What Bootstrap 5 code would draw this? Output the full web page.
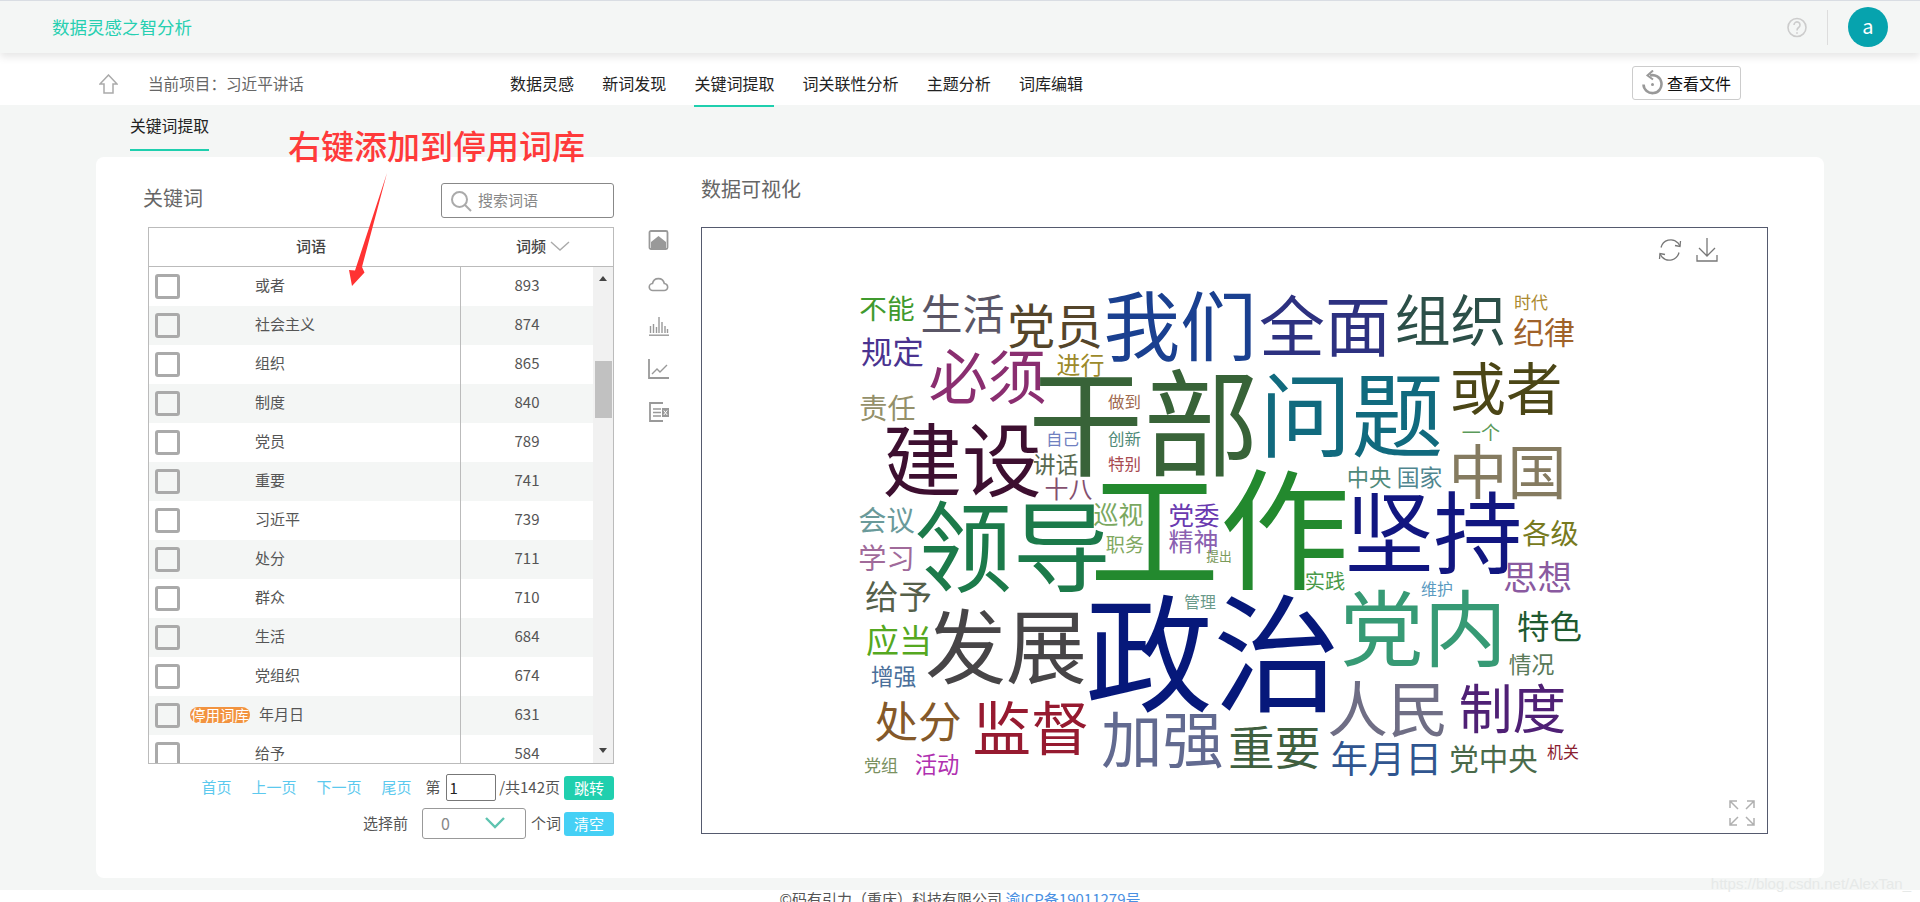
<!doctype html>
<html lang="zh-CN">

<head>
    <meta charset="UTF-8">
    <meta name="viewport" content="width=device-width, initial-scale=1.0">
    <title>数据灵感之智分析</title>
    <link href="https://cdn.jsdelivr.net/npm/bootstrap@5.3.3/dist/css/bootstrap.min.css" rel="stylesheet">
    <style>
        html, body { height: 902px; overflow: hidden; }
        body {
            background-color: #f4f6f5;
            font-family: "Noto Sans CJK SC", "Liberation Sans", sans-serif;
            font-size: 15px;
            color: #555;
            position: relative;
        }

        /* top bar */
        .top-bar {
            height: 53px;
            padding: 0 32px 0 52px;
            background: #f4f6f5;
            border-top: 1px solid #d9dde3;
            box-shadow: 0 4px 8px rgba(0, 0, 0, .1);
            position: relative;
            flex-wrap: nowrap;
        }
        .top-title { color: #26cfb1; font-size: 17.5px; }
        .top-sep { width: 1px; height: 35px; background: #ddd; margin: 0 20px; }
        .avatar {
            width: 40px; height: 40px; border-radius: 50%;
            background: #06a3ae; color: #fff; font-size: 20px; line-height: 38px; text-align: center;
        }

        /* menu bar */
        .menu-wrap { padding-top: 9px; background: #fff; }
        .menu-bar { height: 43px; padding-left: 99px; }
        .project { width: 411px; color: #666; font-size: 15.6px; }
        .project svg { margin-right: 30px; }
        .menu-list { gap: 28.2px; }
        .menu-list .nav-link {
            padding: 0; height: 45px; line-height: 42px; color: #222; font-size: 16px; margin-bottom: -2px;
            border-bottom: 2px solid transparent;
        }
        .menu-list .nav-link.active { border-bottom-color: #1fcfae; }
        .file-btn {
            width: 109px; height: 34px; padding: 0 0 0 9px; margin: 4px 179px 0 auto;
            border: 1px solid #ccc; border-radius: 3px; color: #111; font-size: 16px; gap: 4px;
            background: #fff;
        }

        /* sub tab */
        .sub-tabs { height: 52px; padding-left: 130px; }
        .sub-tab {
            width: 79px; height: 46px; line-height: 42px; color: #222; font-size: 15.8px; white-space: nowrap;
            border-bottom: 2px solid #1fcfae;
        }

        /* main panel */
        .panel-main { margin: 0 96px; height: 721px; border: 0; border-radius: 8px; }
        .left-col { width: 471px; margin-left: 47px; padding-top: 26px; flex: none; }
        .left-title { height: 35px; margin-bottom: 9px; font-size: 20px; color: #666; }
        .left-title > span { margin-top: -6px; }
        .search-box {
            width: 173px; height: 35px; border: 1px solid #888; border-radius: 3px; padding-left: 8px; gap: 6px;
            color: #888; font-size: 15px;
        }

        .word-head {
            margin-left: 5px; height: 40px; border: 1px solid #bbb; font-weight: 500; color: #444;
            padding-bottom: 2px;
        }
        .word-head .head-a { width: 311px; padding-left: 13px; text-align: center; }
        .word-head .head-b { padding-left: 56px; gap: 4px; }
        .word-body {
            margin-left: 5px; height: 497px; border: 1px solid #bbb; border-top: 0;
        }
        .word-rows { width: 444px; overflow: hidden; }
        .word-row { height: 39px; flex: none; }
        .word-row:nth-child(even) { background: #f4f6f5; }
        .word-row .form-check-input {
            width: 25px; height: 25px; margin: 0 0 0 6px; flex: none;
            border: 3px solid #aaa; border-radius: 3px; background-color: transparent;
        }
        .word-cell { width: 280px; padding: 0 0 2px 10px; }
        .word-slot { width: 65px; flex: none; }
        .stop-tag {
            display: block; width: 60px; height: 16px; line-height: 15px; border-radius: 8px;
            background: #f2933f; color: #fff; font-size: 14.5px; text-align: center; white-space: nowrap;
        }
        .freq-cell { flex: 1; height: 100%; border-left: 1px solid #bbb; text-align: center; line-height: 35px; }
        .fake-scroll { width: 20px; background: #f1f1f1; }
        .thumb { width: 17px; height: 57px; background: #c1c1c1; margin: 80px auto 0; }
        .arr-up, .arr-down { width: 0; height: 0; margin: 0 auto; border: 4px solid transparent; border-left-width: 4.5px; border-right-width: 4.5px; }
        .arr-up { border-bottom: 5px solid #444; border-top: 0; margin-top: 9px; }
        .arr-down { border-top: 5px solid #444; border-bottom: 0; margin-top: auto; margin-bottom: 10px; }

        .pager { height: 27px; margin-top: 10px; }
        .pager a { color: #5cc9ee; text-decoration: none; margin-right: 20px; }
        .pager a.last-link { margin-right: 14px; }
        .page-input {
            width: 50px; height: 27px; margin: 0 3.6px 0 5px; padding: 0 3px; border: 1px solid #777; border-radius: 2px;
            color: #222; font-size: 15px;
        }
        .go-btn {
            width: 50px; height: 24px; padding: 0; margin-left: 4px; border: 0; border-radius: 3px;
            color: #fff; font-size: 15px; line-height: 24px;
        }
        .go-green, .go-green:hover { background: #20cfae; color: #fff; }
        .go-blue, .go-blue:hover { background: #45d0f5; color: #fff; margin-left: 3px; }
        .top-pick { height: 31px; margin-top: 7px; }
        .pick-box {
            width: 104px; height: 31px; margin: 0 5px 0 14px; padding: 0 20px 2px 18px;
            border: 1px solid #999; border-radius: 3px; color: #888; font-size: 16px;
        }

        /* tools */
        .tool-col { width: 21px; margin: 73px 0 0 34px; gap: 23px; flex: none; }

        /* chart */
        .right-col { margin-left: 32px; padding-top: 17px; flex: none; }
        .chart-title { height: 53px; font-size: 20px; line-height: 30px; color: #666; }
        .chart-box {
            width: 1067px; height: 607px; border: 1px solid #555a6e; position: relative; overflow: hidden;
        }
        .cloud-word {
            position: absolute; line-height: 1; white-space: nowrap;
        }
        .chart-tool { position: absolute; }

        /* footer */
        .foot-line {
            margin-top: 12px; background: #fff; height: 40px; text-align: center; color: #555; line-height: 17px;
        }
        .foot-line a { color: #4a90e2; text-decoration: none; }

        /* overlays */
        .note-text {
            position: absolute; left: 288px; top: 122px; font-size: 33px; line-height: 46px; color: #ff3a3a;
            white-space: nowrap; font-weight: 500;
        }
        .note-arrow { position: absolute; left: 340px; top: 170px; }
        .water-mark {
            position: absolute; right: 9px; top: 871px; font-family: "Liberation Sans", sans-serif;
            font-size: 15px; line-height: 26px; color: #e6e9e8;
        }
    </style>
</head>

<body>
    <nav class="navbar top-bar">
        <span class="top-title">数据灵感之智分析</span>
        <div class="d-flex align-items-center ms-auto">
            <svg width="20" height="21" viewBox="0 0 20 21" fill="none" stroke="#ccc" stroke-width="1.6">
                <circle cx="10" cy="10.5" r="9"/>
                <path d="M7 8a3 3 0 1 1 4.6 2.5C10.500 11.300 10 12 10 13.500M10 15.200v1.600"/>
            </svg>
            <div class="top-sep"></div>
            <div class="avatar">a</div>
        </div>
    </nav>

    <div class="menu-wrap">
        <div class="menu-bar d-flex">
            <div class="project d-flex align-items-center">
                <svg width="19" height="20" viewBox="0 0 19 20" fill="none" stroke="#aaa" stroke-width="1.5">
                    <path d="M1 10 9.500 1 18 10h-4v9H5v-9z"/>
                </svg>
                <span>当前项目：习近平讲话</span>
            </div>
            <ul class="nav menu-list">
                <li class="nav-item"><a class="nav-link" href="#">数据灵感</a></li>
                <li class="nav-item"><a class="nav-link" href="#">新词发现</a></li>
                <li class="nav-item"><a class="nav-link active" href="#">关键词提取</a></li>
                <li class="nav-item"><a class="nav-link" href="#">词关联性分析</a></li>
                <li class="nav-item"><a class="nav-link" href="#">主题分析</a></li>
                <li class="nav-item"><a class="nav-link" href="#">词库编辑</a></li>
            </ul>
            <button class="btn file-btn d-flex align-items-center">
                <svg width="21" height="26" viewBox="0 0 21 26" fill="none" stroke="#999" stroke-width="2.6">
                    <path d="M8 5.500a9 9 0 1 1-6.500 9"/>
                    <path d="M11 0.500 5.500 5.500 11 9.500" stroke-width="2"/>
                    <circle cx="10.500" cy="14.500" r="1.500" fill="#999" stroke="none"/>
                </svg>
                <span>查看文件</span>
            </button>
        </div>
    </div>

    <div class="sub-tabs"><div class="sub-tab d-inline-block">关键词提取</div></div>

    <div class="card panel-main flex-row">
        <div class="left-col">
            <div class="left-title d-flex justify-content-between align-items-center">
                <span>关键词</span>
                <div class="search-box d-flex align-items-center">
                    <svg width="22" height="22" viewBox="0 0 22 22" fill="none" stroke="#aaa" stroke-width="2">
                        <circle cx="9.500" cy="9.500" r="7.500"/><path d="m15 15 6 6"/>
                    </svg>
                    <span>搜索词语</span>
                </div>
            </div>

            <div class="word-head d-flex align-items-center">
                <div class="head-a">词语</div>
                <div class="head-b d-flex align-items-center">
                    <span>词频</span>
                    <svg width="20" height="10" viewBox="0 0 20 10" fill="none" stroke="#aaa" stroke-width="1.4"><path d="m1 1 9 8 9-8"/></svg>
                </div>
            </div>
            <div class="word-body d-flex">
                <div class="word-rows d-flex flex-column" id="wordRows"></div>
                <div class="fake-scroll d-flex flex-column">
                    <div class="arr-up"></div>
                    <div class="thumb"></div>
                    <div class="arr-down"></div>
                </div>
            </div>

            <div class="pager d-flex justify-content-end align-items-center">
                <a href="#">首页</a>
                <a href="#">上一页</a>
                <a href="#">下一页</a>
                <a href="#" class="last-link">尾页</a>
                <span>第</span>
                <input class="form-control page-input" type="text" value="1">
                <span>/共142页</span>
                <button class="btn go-btn go-green">跳转</button>
            </div>
            <div class="top-pick d-flex justify-content-end align-items-center">
                <span>选择前</span>
                <div class="pick-box d-flex justify-content-between align-items-center">
                    <span>0</span>
                    <svg width="20" height="12" viewBox="0 0 20 12" fill="none" stroke="#5ec4b0" stroke-width="2.4"><path d="m1 1 9 9 9-9"/></svg>
                </div>
                <span>个词</span>
                <button class="btn go-btn go-blue">清空</button>
            </div>
        </div>

        <div class="tool-col d-flex flex-column">
            <svg width="21" height="20" viewBox="0 0 21 20" fill="none" stroke="#999" stroke-width="1.8">
                <rect x="1.500" y="1" width="18" height="18" rx="1.500"/>
                <path d="M3 18v-6l7.500-6 7.500 6v6z" fill="#999" stroke="none"/>
            </svg>
            <svg width="21" height="20" viewBox="0 0 21 20" fill="none" stroke="#999" stroke-width="1.600">
                <path d="M5 17.500a3.500 3.500 0 0 1-.5-7 6 6 0 0 1 11.800 0 3.500 3.500 0 0 1-.3 7z"/>
            </svg>
            <svg width="21" height="20" viewBox="0 0 21 20" fill="none" stroke="#999" stroke-width="1.400">
                <path d="M1 19.200h20"/>
                <path d="M2.500 17v-7M5.500 17v-9M8.500 17v-6M11 17V1M14 17V6M17 17v-7M19.500 17v-4"/>
            </svg>
            <svg width="21" height="20" viewBox="0 0 21 20" fill="none" stroke="#999" stroke-width="1.800">
                <path d="M1 0v19h20"/><path d="m4 15 5-5 3 3 7-7" stroke-width="1.400"/>
            </svg>
            <svg width="21" height="20" viewBox="0 0 21 20" fill="none" stroke="#999" stroke-width="1.800">
                <path d="M15 1H2v18h13"/>
                <path d="M5 7h8M5 10.500h8M5 14h8" stroke-width="1.500"/>
                <rect x="14" y="6" width="7" height="9" fill="#999" stroke="none"/>
                <path d="m15.800 8.500 3.400 4.500m0-4.500-3.400 4.500" stroke="#fff" stroke-width="1"/>
            </svg>
        </div>

        <div class="right-col">
            <div class="chart-title">数据可视化</div>
            <div class="chart-box" id="cloudBox">
                <svg class="chart-tool" style="left:956px;top:10px" width="24" height="24" viewBox="0 0 24 24" fill="none" stroke="#777" stroke-width="1.300">
                    <path d="M3 9.500A10 10 0 0 1 20 5l2 3"/><path d="m22.500 3-.5 5.500-5-1"/>
                    <path d="M21 14.500A10 10 0 0 1 4 19l-2-3"/><path d="m1.500 21 .5-5.500 5 1"/>
                </svg>
                <svg class="chart-tool" style="left:994px;top:10px" width="22" height="24" viewBox="0 0 22 24" fill="none" stroke="#777" stroke-width="1.300">
                    <path d="M11 0v18M3 10l8 8 8-8M1 17v6h20v-6"/>
                </svg>
                <svg class="chart-tool" style="left:1027px;top:572px" width="26" height="26" viewBox="0 0 26 26" fill="none" stroke="#b0b0b0" stroke-width="1.500">
                    <path d="M1 8V1h7M1 1l8 8M18 1h7v7M25 1l-8 8M1 18v7h7M1 25l8-8M18 25h7v-7M25 25l-8-8"/>
                </svg>
            </div>
        </div>
    </div>

    <div class="foot-line">©码有引力（重庆）科技有限公司 <a href="#">渝ICP备19011279号</a></div>

    <div class="note-text">右键添加到停用词库</div>
    <svg class="note-arrow" width="50" height="120" viewBox="340 170 50 120">
        <path d="M387 173 362 267l2.500 5.500L352 286l-3-16 6 .5z" fill="#ff3333"/>
    </svg>
    <div class="water-mark">https://blog.csdn.net/AlexTan_</div>

    <script>
        // table rows
        const rows = [
            ['或者', 893], ['社会主义', 874], ['组织', 865], ['制度', 840], ['党员', 789], ['重要', 741], ['习近平', 739],
            ['处分', 711], ['群众', 710], ['生活', 684], ['党组织', 674], ['年月日', 631], ['给予', 584]
        ];
        document.getElementById('wordRows').innerHTML = rows.map(r => `
            <div class="word-row d-flex align-items-center">
                <input class="form-check-input" type="checkbox">
                <div class="word-cell d-flex align-items-center">
                    <div class="word-slot">${r[0] === '年月日' ? '<span class="stop-tag">停用词库</span>' : ''}</div>
                    <span${r[0] === '年月日' ? ' class="ms-1"' : ''}>${r[0]}</span>
                </div>
                <div class="freq-cell">${r[1]}</div>
            </div>`).join('');

        // word cloud: text, ink box in page coordinates, colour
        const words = [
            ['不能', 861, 297, 913, 322, '#3f9a2e'], ['生活', 923, 295, 1002, 333, '#5a5666'], ['党员', 1010, 303, 1100, 350, '#54452a'],
            ['我们', 1108, 291, 1252, 363, '#1a4090'], ['规定', 863, 338, 922, 367, '#4a3390'], ['必须', 932, 348, 1043, 405, '#8a2e70'],
            ['进行', 1058, 354, 1103, 376, '#9c8a2a'], ['干部', 1035, 370, 1252, 477, '#386338'], ['责任', 861, 396, 914, 422, '#94906a'],
            ['建设', 887, 423, 1037, 497, '#3d0f30'], ['做到', 1109, 395, 1140, 409, '#a06a50'], ['自己', 1047, 433, 1078, 446, '#6f80c0'],
            ['创新', 1109, 432, 1140, 447, '#4f8a78'], ['特别', 1109, 457, 1140, 472, '#a84a50'], ['讲话', 1034, 453, 1077, 476, '#5a6a50'],
            ['十八', 1046, 478, 1091, 501, '#85506f'], ['会议', 860, 507, 913, 535, '#6a9a9a'], ['领导', 920, 502, 1105, 592, '#1c7a4a'],
            ['巡视', 1095, 503, 1142, 527, '#7aa860'], ['党委', 1170, 503, 1218, 527, '#6a3ab0'], ['精神', 1170, 530, 1217, 553, '#8a60b0'],
            ['职务', 1107, 537, 1143, 554, '#80a860'], ['工作', 1097, 470, 1342, 590, '#23892e'], ['中国', 1452, 442, 1563, 502, '#857b60'],
            ['问题', 1265, 372, 1438, 458, '#116a7e'], ['全面', 1263, 297, 1387, 357, '#2d3180'], ['组织', 1398, 295, 1503, 346, '#2c4f48'],
            ['时代', 1515, 294, 1547, 310, '#ab8a30'], ['纪律', 1515, 319, 1573, 347, '#a0622a'], ['或者', 1453, 363, 1559, 415, '#4b4616'],
            ['一个', 1463, 425, 1499, 442, '#5a9a5a'], ['中央', 1348, 467, 1390, 488, '#4f8a7a'], ['国家', 1398, 467, 1441, 488, '#50868f'],
            ['坚持', 1350, 492, 1517, 575, '#111680'], ['各级', 1524, 520, 1577, 547, '#777a20'], ['学习', 860, 545, 913, 572, '#a06a9a'],
            ['给予', 867, 582, 930, 612, '#55604a'], ['发展', 930, 610, 1082, 683, '#474547'], ['政治', 1093, 595, 1333, 712, '#06187a'],
            ['提出', 1207, 552, 1231, 563, '#7a9a5a'], ['管理', 1185, 596, 1215, 609, '#6a9a8a'], ['应当', 868, 625, 930, 655, '#55a820'],
            ['增强', 872, 666, 915, 687, '#4a6f9a'], ['处分', 877, 702, 959, 742, '#84592a'], ['监督', 976, 702, 1086, 755, '#961a30'],
            ['加强', 1105, 713, 1220, 768, '#626a90'], ['党组', 865, 758, 897, 772, '#7a9060'], ['活动', 916, 755, 958, 773, '#b030b0'],
            ['实践', 1306, 573, 1344, 592, '#4a9a4a'], ['维护', 1422, 583, 1452, 596, '#5a9ac0'], ['思想', 1505, 562, 1570, 592, '#8a5aa0'],
            ['党内', 1345, 588, 1502, 668, '#379a75'], ['特色', 1519, 613, 1580, 642, '#1f5a30'], ['情况', 1510, 655, 1553, 675, '#5a7a5a'],
            ['人民', 1331, 682, 1445, 737, '#6f6e85'], ['制度', 1462, 685, 1563, 733, '#4f2075'], ['重要', 1231, 727, 1318, 768, '#3f5f3f'],
            ['年月日', 1333, 742, 1440, 777, '#30558f'], ['党中央', 1451, 745, 1536, 773, '#4a6a4a'], ['机关', 1548, 746, 1578, 759, '#8a2030']
        ];
        const box = document.getElementById('cloudBox');
        words.forEach(w => {
            const n = w[0].length;
            const size = (w[3] - w[1]) / (n - 0.12);
            const span = document.createElement('span');
            span.className = 'cloud-word';
            span.textContent = w[0];
            span.style.fontSize = size + 'px';
            span.style.color = w[5];
            span.style.left = ((w[1] + w[3]) / 2 - n * size / 2 - 702) + 'px';
            span.style.top = ((w[2] + w[4]) / 2 - 0.556 * size - 228) + 'px';
            box.appendChild(span);
        });
    </script>
    <script src="https://cdn.jsdelivr.net/npm/bootstrap@5.3.3/dist/js/bootstrap.bundle.min.js"></script>
</body>

</html>
